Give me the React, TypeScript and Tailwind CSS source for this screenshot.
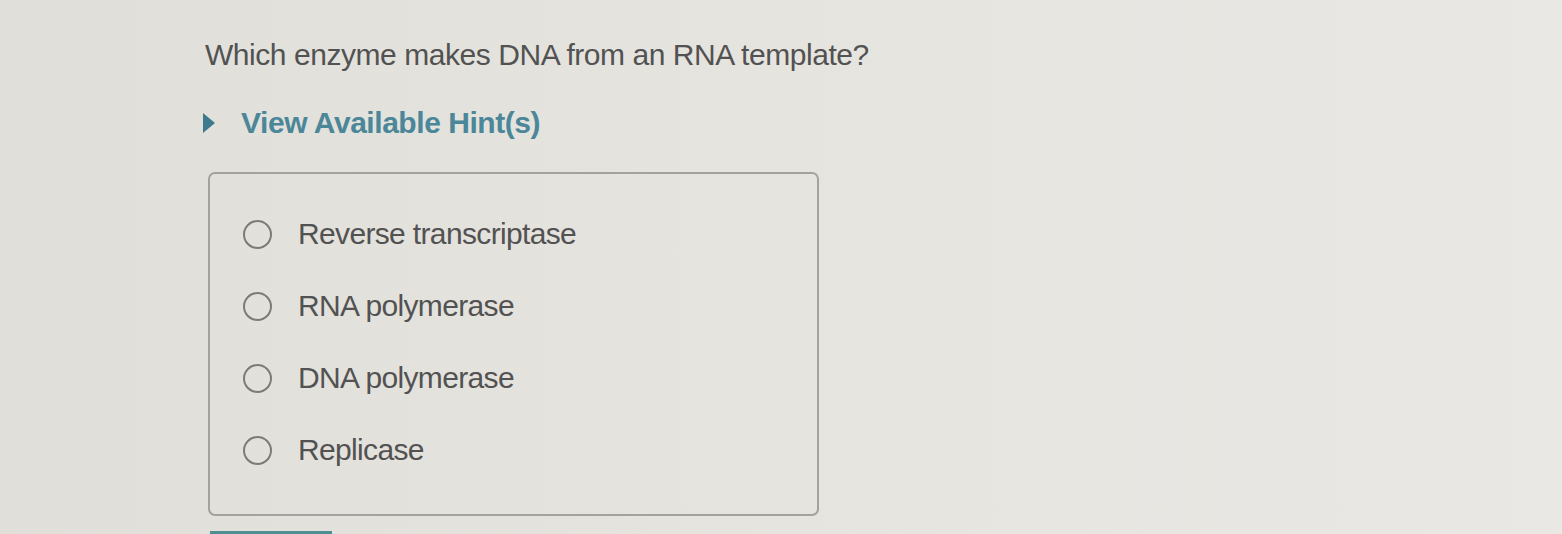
import React from 'react';

const options = ['Reverse transcriptase', 'RNA polymerase', 'DNA polymerase', 'Replicase'];

export default function App() {
  return (
    <div className="h-[534px] w-full overflow-hidden bg-gradient-to-r from-[#e1dfda] via-[#e6e4df] to-[#e9e8e4] font-['Liberation_Sans',Arial,sans-serif] text-[#525252]">
      <div className="pl-[205px] pt-[37px]">
        <h1 className="text-[30px] leading-[36px] tracking-[-0.45px]">
          Which enzyme makes DNA from an RNA template?
        </h1>

        <button className="mt-[32px] flex items-center gap-[26px] text-[30px] font-bold leading-[36px] tracking-[-0.45px] text-[#4b8799]">
          <svg width="12" height="20" viewBox="0 0 12 20" className="ml-[-2px]">
            <path d="M0 0 L12 10 L0 20 Z" fill="#3e7a8e" />
          </svg>
          View Available Hint(s)
        </button>

        <div className="mt-[31px] ml-[3px] h-[344px] w-[611px] rounded-[7px] border-2 border-[#a2a29f] pt-[42px]">
          <div className="flex flex-col gap-[36px]">
            {options.map(opt => (
              <label key={opt} className="flex items-center gap-[26px] pl-[33px]">
                <span className="h-[29px] w-[29px] shrink-0 rounded-full border-[2.5px] border-[#7b7b79]" />
                <span className="text-[30px] leading-[36px] tracking-[-0.65px]">{opt}</span>
              </label>
            ))}
          </div>
        </div>

        <div className="mt-[15px] ml-[5px] h-[8px] w-[122px] bg-[#4f8f92]" />
      </div>
    </div>
  );
}
